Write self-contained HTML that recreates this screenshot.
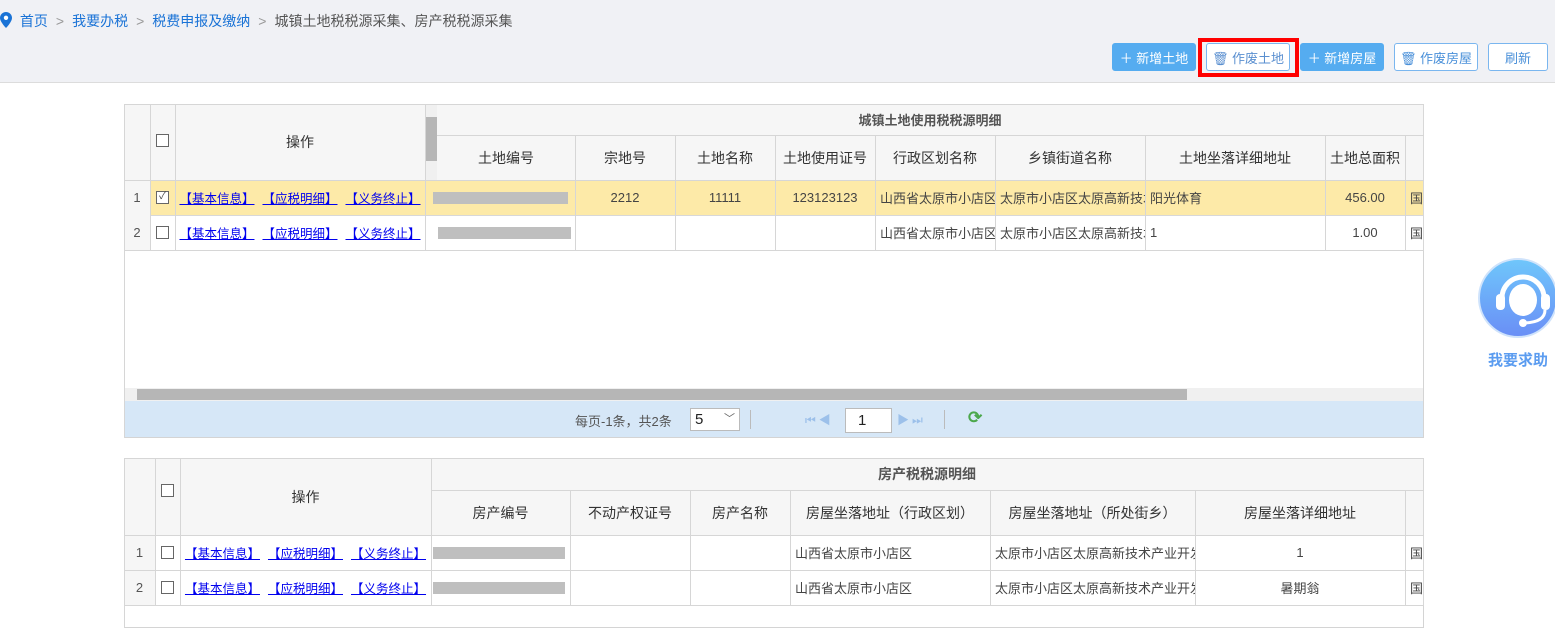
<!DOCTYPE html>
<html><head><meta charset="utf-8"><style>
*{margin:0;padding:0;box-sizing:border-box}
body{width:1555px;height:621px;overflow:hidden;background:#fff;font-family:"Liberation Sans","Noto Sans CJK SC",sans-serif;font-size:13px;color:#333;position:relative}
.top{position:absolute;left:0;top:0;width:1555px;height:83px;background:#f0f1f5;border-bottom:1px solid #dcdcdc}
.bc{position:absolute;left:0;top:11px;font-size:14px;color:#555;white-space:nowrap}
.bc a{color:#1a73d6;text-decoration:none}
.bc .s{color:#999;margin:0 8px}
.btn{position:absolute;top:43px;height:28px;border-radius:3px;font-size:13px;display:flex;align-items:center;justify-content:center;white-space:nowrap}
.bf{background:#55acf0;color:#fff;border:1px solid #55acf0}
.bo{background:#fff;color:#4a90d9;border:1px solid #7ab6ef}
.c{position:absolute;border-right:1px solid #d8d8d8;border-bottom:1px solid #d8d8d8;display:flex;align-items:center;justify-content:center;overflow:hidden;white-space:nowrap;font-size:13px;color:#444}
.h{background:#f6f6f6;font-size:14px;color:#333}
.l{justify-content:flex-start;padding-left:5px}
.y{background:#fdeaa8}
.rn{background:#f6f6f6;color:#555}
.cb{width:13px;height:13px;border:1px solid #666;background:#fff}
.lk a{color:#00e;text-decoration:underline;margin:0 4px;font-size:12.5px}
.gb{display:block;height:12px;background:#bfbfbf}
.v{position:absolute;width:1px;background:#d6d6d6;z-index:5}
.hz{position:absolute;height:1px;background:#d6d6d6;z-index:5}
</style></head><body>
<div class="top">
<div class="bc"><svg width="12" height="16" viewBox="0 0 12 16" style="vertical-align:-2px"><path d="M6 0C2.7 0 0 2.6 0 5.9 0 10 6 16 6 16s6-6 6-10.1C12 2.6 9.3 0 6 0z" fill="#1a73d6"/><circle cx="6" cy="5.8" r="2.2" fill="#fff"/></svg> <a style="margin-left:4px">首页</a><span class="s">&gt;</span><a>我要办税</a><span class="s">&gt;</span><a>税费申报及缴纳</a><span class="s">&gt;</span>城镇土地税税源采集、房产税税源采集</div>
<div class="btn bf" style="left:1112px;width:84px">＋ 新增土地</div>
<div style="position:absolute;left:1198px;top:38px;width:101px;height:39px;border:4px solid #f00"></div>
<div class="btn bo" style="left:1206px;width:84px;color:#5a8fd0">🗑 作废土地</div>
<div class="btn bf" style="left:1300px;width:84px">＋ 新增房屋</div>
<div class="btn bo" style="left:1394px;width:84px">🗑 作废房屋</div>
<div class="btn bo" style="left:1488px;width:60px">刷新</div>
</div>

<!-- table 1 -->
<div style="position:absolute;left:124px;top:104px;width:1300px;height:334px;border:1px solid #d4d4d4"></div>
<div class="c h" style="left:124px;top:104px;width:27px;height:77px"></div>
<div class="c h" style="left:150px;top:104px;width:26px;height:77px;align-items:flex-start;padding-top:30px"><span class="cb"></span></div>
<div class="c h" style="left:175px;top:104px;width:251px;height:77px">操作</div>
<div style="position:absolute;left:425px;top:104px;width:12px;height:76px;background:#f0f0f0"><div style="position:absolute;left:0;top:13px;width:12px;height:44px;background:#b6b6b6"></div></div>
<div class="c h" style="left:437px;top:104px;width:987px;height:32px;font-size:13px;font-weight:bold;color:#555">城镇土地使用税税源明细</div>
<div class="c h" style="left:437px;top:135px;width:139px;height:46px">土地编号</div>
<div class="c h" style="left:575px;top:135px;width:101px;height:46px">宗地号</div>
<div class="c h" style="left:675px;top:135px;width:101px;height:46px">土地名称</div>
<div class="c h" style="left:775px;top:135px;width:101px;height:46px">土地使用证号</div>
<div class="c h" style="left:875px;top:135px;width:121px;height:46px">行政区划名称</div>
<div class="c h" style="left:995px;top:135px;width:151px;height:46px">乡镇街道名称</div>
<div class="c h" style="left:1145px;top:135px;width:181px;height:46px">土地坐落详细地址</div>
<div class="c h" style="left:1325px;top:135px;width:81px;height:46px">土地总面积</div>
<div class="c h" style="left:1405px;top:135px;width:19px;height:46px"></div>
<!-- header lines t1 -->
<div class="hz" style="left:124px;top:104px;width:1300px"></div>
<div class="hz" style="left:437px;top:135px;width:987px"></div>
<div class="hz" style="left:124px;top:180px;width:1300px"></div>
<div class="v" style="left:150px;top:104px;height:147px"></div>
<div class="v" style="left:175px;top:104px;height:147px"></div>
<div class="v" style="left:425px;top:104px;height:147px"></div>
<div class="v" style="left:575px;top:135px;height:116px"></div>
<div class="v" style="left:675px;top:135px;height:116px"></div>
<div class="v" style="left:775px;top:135px;height:116px"></div>
<div class="v" style="left:875px;top:135px;height:116px"></div>
<div class="v" style="left:995px;top:135px;height:116px"></div>
<div class="v" style="left:1145px;top:135px;height:116px"></div>
<div class="v" style="left:1325px;top:135px;height:116px"></div>
<div class="v" style="left:1405px;top:135px;height:116px"></div>

<div class="c rn" style="left:124px;top:180px;width:27px;height:36px">1</div>
<div class="c y" style="left:150px;top:180px;width:26px;height:36px"><span class="cb" style="font-size:10px;line-height:10px;text-align:center">✓</span></div>
<div class="c y lk" style="left:175px;top:180px;width:251px;height:36px"><a>【基本信息】</a><a>【应税明细】</a><a>【义务终止】</a></div>
<div class="c y" style="left:425px;top:180px;width:151px;height:36px"><span class="gb" style="width:135px"></span></div>
<div class="c y" style="left:575px;top:180px;width:101px;height:36px">2212</div>
<div class="c y" style="left:675px;top:180px;width:101px;height:36px">11111</div>
<div class="c y" style="left:775px;top:180px;width:101px;height:36px">123123123</div>
<div class="c y l" style="left:875px;top:180px;width:121px;height:36px">山西省太原市小店区</div>
<div class="c y l" style="left:995px;top:180px;width:151px;height:36px">太原市小店区太原高新技术</div>
<div class="c y l" style="left:1145px;top:180px;width:181px;height:36px">阳光体育</div>
<div class="c y" style="left:1325px;top:180px;width:81px;height:36px">456.00</div>
<div class="c y l" style="left:1405px;top:180px;width:19px;height:36px">国</div>

<div class="c rn" style="left:124px;top:215px;width:27px;height:36px">2</div>
<div class="c" style="left:150px;top:215px;width:26px;height:36px"><span class="cb"></span></div>
<div class="c lk" style="left:175px;top:215px;width:251px;height:36px"><a>【基本信息】</a><a>【应税明细】</a><a>【义务终止】</a></div>
<div class="c" style="left:425px;top:215px;width:151px;height:36px"><span class="gb" style="width:133px;margin-left:8px"></span></div>
<div class="c" style="left:575px;top:215px;width:101px;height:36px"></div>
<div class="c" style="left:675px;top:215px;width:101px;height:36px"></div>
<div class="c" style="left:775px;top:215px;width:101px;height:36px"></div>
<div class="c l" style="left:875px;top:215px;width:121px;height:36px">山西省太原市小店区</div>
<div class="c l" style="left:995px;top:215px;width:151px;height:36px">太原市小店区太原高新技术</div>
<div class="c l" style="left:1145px;top:215px;width:181px;height:36px">1</div>
<div class="c" style="left:1325px;top:215px;width:81px;height:36px">1.00</div>
<div class="c l" style="left:1405px;top:215px;width:19px;height:36px">国</div>
<div class="hz" style="left:124px;top:250px;width:1300px"></div>

<div style="position:absolute;left:125px;top:388px;width:1298px;height:13px;background:#f0f0f0"><div style="position:absolute;left:12px;top:1px;width:1050px;height:11px;background:#b6b6b6"></div></div>
<div style="position:absolute;left:125px;top:401px;width:1298px;height:36px;background:#d6e7f7;font-size:13px;color:#555">
<span style="position:absolute;left:450px;top:10px">每页-1条，共2条</span>
<div style="position:absolute;left:565px;top:7px;width:50px;height:23px;background:#fff;border:1px solid #bbb;padding-left:4px;font-size:15px;color:#222;line-height:21px">5<span style="position:absolute;right:4px;top:0;font-size:11px;color:#666">﹀</span></div>
<div style="position:absolute;left:625px;top:9px;width:1px;height:19px;background:#bbb"></div>
<span style="position:absolute;left:680px;top:10px;color:#9cc0ea;font-size:12px;letter-spacing:3px">⏮◀</span>
<div style="position:absolute;left:720px;top:7px;width:47px;height:25px;background:#fff;border:1px solid #bbb;padding-left:12px;font-size:15px;color:#222;line-height:23px">1</div>
<span style="position:absolute;left:772px;top:10px;color:#9cc0ea;font-size:12px;letter-spacing:3px">▶⏭</span>
<div style="position:absolute;left:819px;top:9px;width:1px;height:19px;background:#bbb"></div>
<span style="position:absolute;left:843px;top:7px;color:#4ca84c;font-size:17px;font-weight:bold">⟳</span>
</div>

<!-- helper -->
<div style="position:absolute;left:1478px;top:258px;width:80px;height:80px;border-radius:50%;background:linear-gradient(#6fc6fb,#6a8ff6);border:2px solid #cfe3fb"></div>
<svg style="position:absolute;left:1490px;top:268px" width="66" height="62" viewBox="0 0 66 62"><path d="M12 30a21 21 0 0 1 42 0" stroke="#fff" stroke-width="5" fill="none"/><ellipse cx="33" cy="32" rx="14" ry="16" fill="#fff"/><rect x="6" y="26" width="9" height="16" rx="4" fill="#fff"/><rect x="51" y="26" width="9" height="16" rx="4" fill="#fff"/><path d="M55 42q0 12-20 13" stroke="#fff" stroke-width="3" fill="none"/><circle cx="33" cy="55" r="4" fill="#fff"/></svg>
<div style="position:absolute;left:1488px;top:349px;font-size:15px;font-weight:bold;color:#5b9cf0;white-space:nowrap">我要求助</div>

<!-- table 2 -->
<div style="position:absolute;left:124px;top:458px;width:1300px;height:170px;border:1px solid #d4d4d4"></div>
<div class="c h" style="left:124px;top:458px;width:32px;height:78px"></div>
<div class="c h" style="left:155px;top:458px;width:26px;height:78px;align-items:flex-start;padding-top:26px"><span class="cb"></span></div>
<div class="c h" style="left:180px;top:458px;width:252px;height:78px">操作</div>
<div class="c h" style="left:431px;top:458px;width:993px;height:33px;font-weight:bold;color:#555">房产税税源明细</div>
<div class="c h" style="left:431px;top:490px;width:140px;height:46px">房产编号</div>
<div class="c h" style="left:570px;top:490px;width:121px;height:46px">不动产权证号</div>
<div class="c h" style="left:690px;top:490px;width:101px;height:46px">房产名称</div>
<div class="c h" style="left:790px;top:490px;width:201px;height:46px">房屋坐落地址（行政区划）</div>
<div class="c h" style="left:990px;top:490px;width:206px;height:46px">房屋坐落地址（所处街乡）</div>
<div class="c h" style="left:1195px;top:490px;width:211px;height:46px">房屋坐落详细地址</div>
<div class="c h" style="left:1405px;top:490px;width:19px;height:46px"></div>

<div class="c rn" style="left:124px;top:535px;width:32px;height:36px">1</div>
<div class="c" style="left:155px;top:535px;width:26px;height:36px"><span class="cb"></span></div>
<div class="c lk" style="left:180px;top:535px;width:252px;height:36px"><a>【基本信息】</a><a>【应税明细】</a><a>【义务终止】</a></div>
<div class="c l" style="left:431px;top:535px;width:140px;height:36px;padding-left:2px"><span class="gb" style="width:132px"></span></div>
<div class="c" style="left:570px;top:535px;width:121px;height:36px"></div>
<div class="c" style="left:690px;top:535px;width:101px;height:36px"></div>
<div class="c l" style="left:790px;top:535px;width:201px;height:36px">山西省太原市小店区</div>
<div class="c l" style="left:990px;top:535px;width:206px;height:36px">太原市小店区太原高新技术产业开发区</div>
<div class="c" style="left:1195px;top:535px;width:211px;height:36px">1</div>
<div class="c l" style="left:1405px;top:535px;width:19px;height:36px">国</div>

<div class="c rn" style="left:124px;top:570px;width:32px;height:36px">2</div>
<div class="c" style="left:155px;top:570px;width:26px;height:36px"><span class="cb"></span></div>
<div class="c lk" style="left:180px;top:570px;width:252px;height:36px"><a>【基本信息】</a><a>【应税明细】</a><a>【义务终止】</a></div>
<div class="c l" style="left:431px;top:570px;width:140px;height:36px;padding-left:2px"><span class="gb" style="width:132px"></span></div>
<div class="c" style="left:570px;top:570px;width:121px;height:36px"></div>
<div class="c" style="left:690px;top:570px;width:101px;height:36px"></div>
<div class="c l" style="left:790px;top:570px;width:201px;height:36px">山西省太原市小店区</div>
<div class="c l" style="left:990px;top:570px;width:206px;height:36px">太原市小店区太原高新技术产业开发区</div>
<div class="c" style="left:1195px;top:570px;width:211px;height:36px">暑期翁</div>
<div class="c l" style="left:1405px;top:570px;width:19px;height:36px">国</div>
<!-- header lines t2 -->
<div class="hz" style="left:124px;top:458px;width:1300px"></div>
<div class="hz" style="left:431px;top:490px;width:993px"></div>
<div class="hz" style="left:124px;top:535px;width:1300px"></div>
<div class="hz" style="left:124px;top:570px;width:1300px"></div>
<div class="hz" style="left:124px;top:605px;width:1300px"></div>
<div class="v" style="left:124px;top:458px;height:170px"></div>
<div class="v" style="left:124px;top:104px;height:334px"></div>
<div class="v" style="left:155px;top:458px;height:148px"></div>
<div class="v" style="left:180px;top:458px;height:148px"></div>
<div class="v" style="left:431px;top:458px;height:148px"></div>
<div class="v" style="left:570px;top:490px;height:116px"></div>
<div class="v" style="left:690px;top:490px;height:116px"></div>
<div class="v" style="left:790px;top:490px;height:116px"></div>
<div class="v" style="left:990px;top:490px;height:116px"></div>
<div class="v" style="left:1195px;top:490px;height:116px"></div>
<div class="v" style="left:1405px;top:490px;height:116px"></div>
</body></html>
